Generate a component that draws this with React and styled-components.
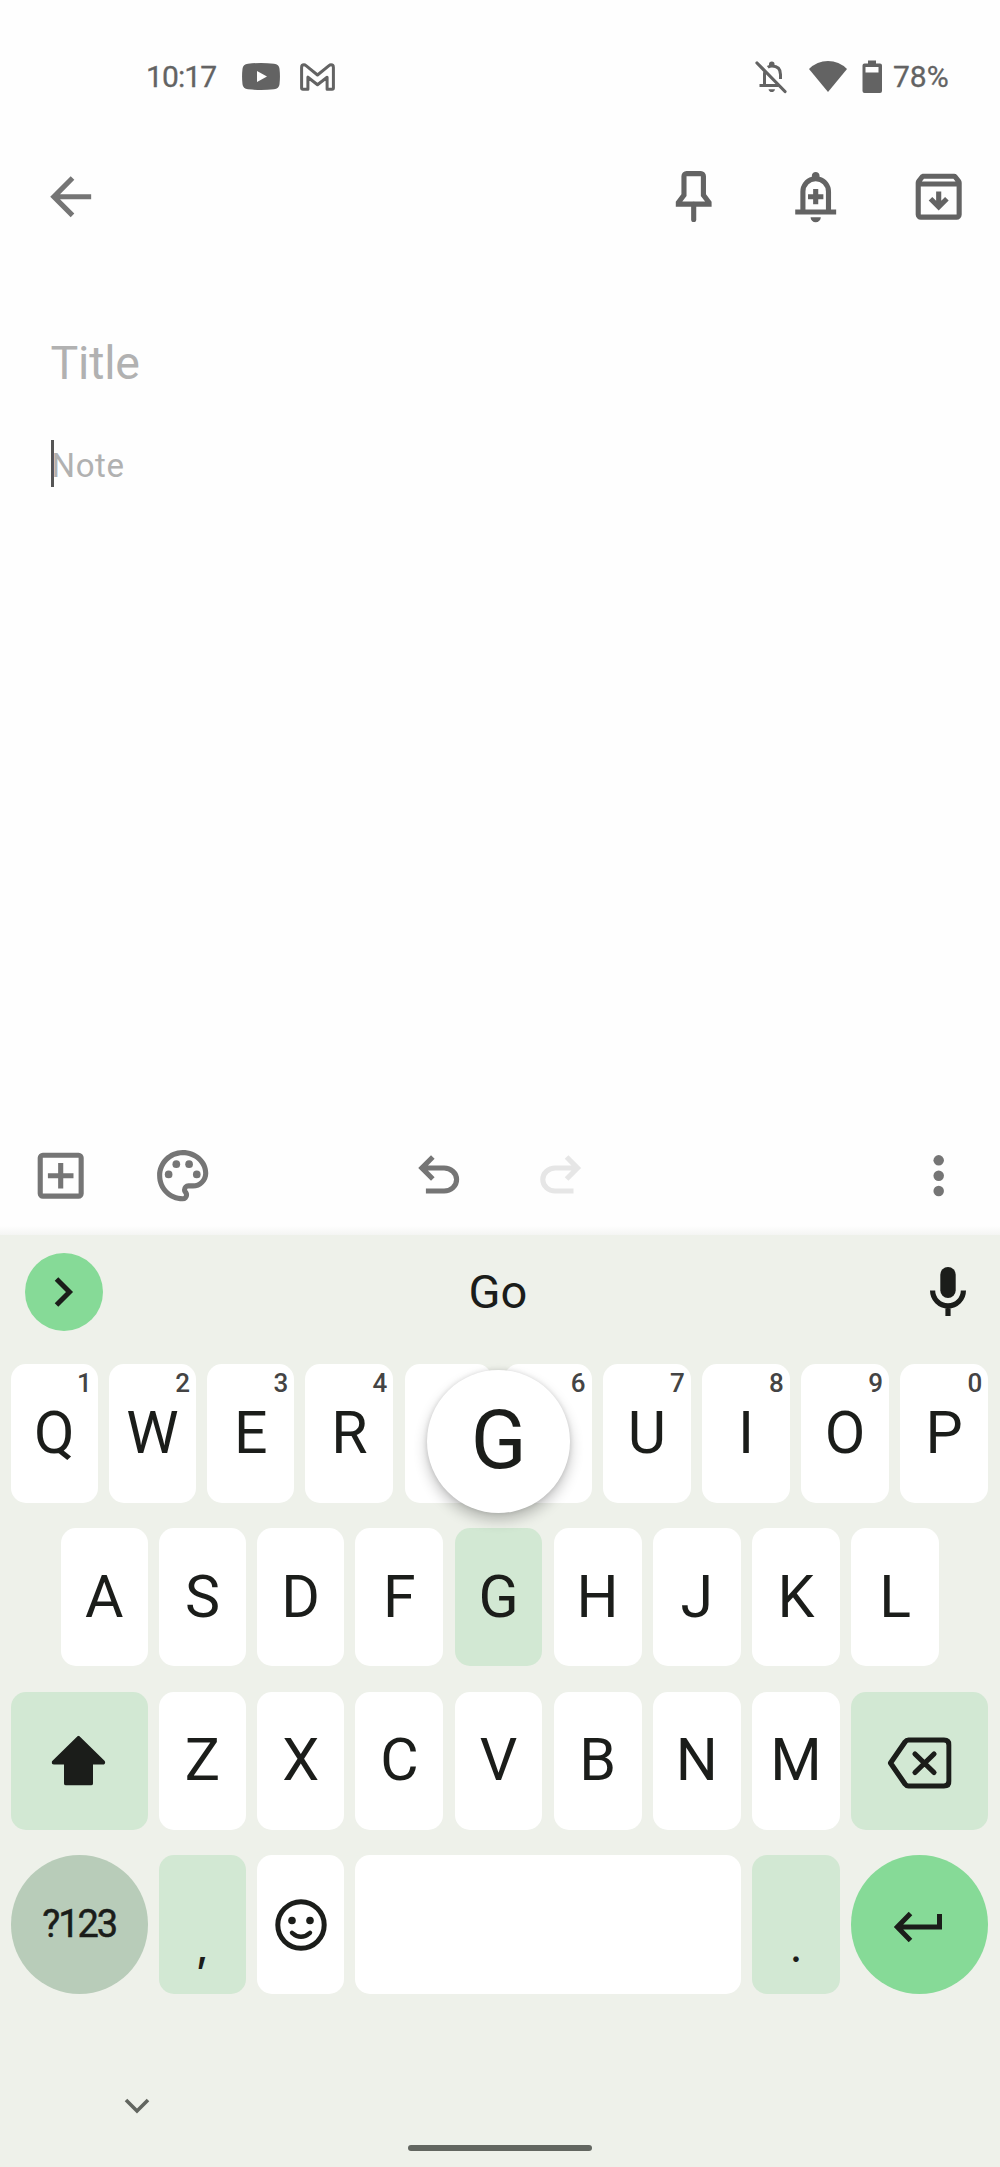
import React from "react"
import styled, { createGlobalStyle } from "styled-components"

const colors = {
  page: "#fefefe",
  keyboard: "#eef1ea",
  key: "#ffffff",
  tonal: "#d2e8d3",
  symbols: "#b8ccb9",
  accent: "#86da97",
  ink: "#1b1d1a",
  icon: "#757575",
  iconDark: "#636363",
  hint: "#b1b1b1",
}

const GlobalStyle = createGlobalStyle`
  body {
    margin: 0;
    background: ${colors.page};
  }
`

const Screen = styled.div`
  display: flex;
  flex-direction: column;
  width: 1000px;
  height: 2167px;
  overflow: hidden;
  background: ${colors.page};
  font-family: Roboto, "Liberation Sans", sans-serif;
  color: ${colors.ink};
`

const Icon = styled.svg`
  display: block;
  flex: none;
  width: ${props => props.$w || 61.4}px;
  height: ${props => props.$h || props.$w || 61.4}px;
  margin-left: ${props => props.$left || 0}px;
  fill: currentColor;
`

const KeyIcon = styled(Icon)`
  transform: translate(${props => props.$x || 0}px, ${props => props.$y || 0}px);
`

const StatusBar = styled.header`
  box-sizing: border-box;
  display: flex;
  align-items: center;
  height: 153px;
  padding: 0 49px 0 146px;
  color: ${colors.iconDark};
`

const Clock = styled.span`
  width: 96px;
  font-size: 30px;
  letter-spacing: -0.9px;
  -webkit-text-stroke: 0.3px;
`

const Notifications = styled.div`
  display: flex;
  align-items: center;
  gap: 20px;
`

const SystemIcons = styled.div`
  display: flex;
  align-items: center;
  margin-left: auto;
`

const Battery = styled.span`
  width: 58px;
  margin-left: 11px;
  font-size: 30px;
  -webkit-text-stroke: 0.3px;
`

const AppBar = styled.nav`
  box-sizing: border-box;
  display: flex;
  align-items: center;
  height: 88px;
  padding: 0 31px 0 40px;
  color: ${colors.iconDark};
`

const Actions = styled.div`
  display: flex;
  gap: 60.8px;
  margin-left: auto;
`

const Back = styled.div`
  color: ${colors.icon};
`

const Editor = styled.main`
  flex: 1;
  padding: 92px 50.5px 0;
  color: ${colors.hint};
`

const TitleField = styled.div`
  height: 60px;
  font-size: 46.5px;
  line-height: 60px;
  letter-spacing: -0.2px;
`

const NoteField = styled.div`
  height: 47px;
  margin-top: 46.5px;
  border-left: 3px solid #555;
  font-size: 33px;
  line-height: 51px;
  letter-spacing: 0.6px;
  text-indent: -2px;
`

const Toolbar = styled.footer`
  box-sizing: border-box;
  display: flex;
  align-items: center;
  height: 119px;
  padding: 0 31px 0 30px;
  background: linear-gradient(to top, #f4f5f3, ${colors.page} 9px);
  color: ${colors.icon};
`

const ToolGroup = styled.div`
  display: flex;
  gap: ${props => props.$gap}px;
  margin-left: ${props => props.$left || 0};
`

const Keyboard = styled.section`
  box-sizing: border-box;
  height: 932px;
  background: ${colors.keyboard};
`

const Suggestions = styled.div`
  box-sizing: border-box;
  display: grid;
  grid-template-columns: 78px 1fr 78px;
  align-items: center;
  height: 129px;
  padding: 0 13px 16px 25px;
`

const Expand = styled.div`
  display: grid;
  place-items: center;
  height: 78px;
  border-radius: 50%;
  background: ${colors.accent};
`

const Suggestion = styled.div`
  padding-right: 16px;
  font-size: 47px;
  text-align: center;
`

const Mic = styled.div`
  display: grid;
  place-items: center;
`

const Rows = styled.div`
  display: flex;
  flex-direction: column;
  gap: 25.1px;
`

const Row = styled.div`
  display: flex;
  gap: 11.25px;
  padding: 0 11.8px 0 ${props => props.$inset || 10.7}px;
`

const Key = styled.div`
  position: relative;
  display: grid;
  place-items: center;
  flex: ${props => (props.$grow ? "1" : "none")};
  box-sizing: border-box;
  width: ${props => (props.$wide ? 137 : props.$narrow ? 87 : 87.9)}px;
  height: 138.7px;
  padding-bottom: 2px;
  border-radius: ${props => (props.$round ? "50%" : "15px")};
  background: ${props => colors[props.$tone || "key"]};
  font-size: 59px;
  line-height: 1;
`

const Digit = styled.span`
  position: absolute;
  top: 6px;
  right: 6px;
  font-size: 26px;
  font-weight: 500;
  line-height: 26px;
  color: #444;
`

const SymbolsLabel = styled.span`
  font-size: 38px;
  letter-spacing: -2px;
  -webkit-text-stroke: 0.5px;
`

const Punctuation = styled.span`
  padding-top: 44px;
  font-family: ${props => props.$font}, sans-serif;
  font-size: 42px;
  font-weight: 500;
`

const KeyPreview = styled.div`
  position: absolute;
  z-index: 1;
  top: -158px;
  left: -27.5px;
  display: grid;
  place-items: center;
  box-sizing: border-box;
  width: 143px;
  height: 143px;
  padding-bottom: 3px;
  border-radius: 50%;
  background: #fff;
  box-shadow: 0 7px 14px rgba(0, 0, 0, 0.24), 0 0 5px rgba(0, 0, 0, 0.12);
  font-size: 82px;
`

const NavBar = styled.div`
  display: grid;
  grid-template-columns: 270.8px 184px;
  column-gap: 137px;
  height: 173px;
  color: #626660;
`

const HideKeyboard = styled.div`
  padding: 103.5px 0 0 124px;
`

const HomeHandle = styled.div`
  align-self: end;
  height: 6px;
  margin-bottom: 16.5px;
  border-radius: 3px;
  background: #626660;
`

const topRow = [
  ["Q", 1],
  ["W", 2],
  ["E", 3],
  ["R", 4],
  ["", ""],
  ["", 6],
  ["U", 7],
  ["I", 8],
  ["O", 9],
  ["P", 0],
]

const undoPath =
  "M7 19v-2h7.1q1.575 0 2.738-1T18 13.5t-1.162-2.5T14.1 10H7.8l2.6 2.6L9 14 4 9l5-5 1.4 1.4L7.8 8h6.3q2.425 0 4.163 1.575T20 13.5t-1.737 3.925T14.1 19z"

const bellPath =
  "M4 19v-2h2v-7q0-2.075 1.25-3.688T10.5 4.2v-.4q0-.625.438-1.062T12 2.3t1.063.438T13.5 3.8v.4q2 .5 3.25 2.112T18 10v7h2v2zm4-2h8v-7q0-1.65-1.175-2.825T12 6 9.175 7.175 8 10zm4 5q-.825 0-1.412-.587T10 20h4q0 .825-.587 1.413T12 22"

const Status = () => (
  <StatusBar>
    <Clock>10:17</Clock>
    <Notifications>
      <Icon $w={38} $h={27} viewBox="0 0 38 27">
        <path
          fillRule="evenodd"
          d="M6 .7Q19-.7 32 .7q5 .5 5.5 5 .9 7.8 0 15.6-.5 4.500-5.500 5-13 1.400-26 0-5-.5-5.500-5-.9-7.800 0-15.600 .5-4.500 5.500-5zM15 8v11l10-5.500z"
        />
      </Icon>
      <Icon $w={35} $h={28} viewBox="0 0 35 28">
        <path
          fill="none"
          stroke="currentColor"
          strokeWidth="3"
          strokeLinejoin="round"
          d="M1.6 25V4.5Q1.6 1.8 4 1.800q1 0 2 .8L17.500 12 29 2.600q1-.8 2-.8 2.400 0 2.400 2.700V25q0 1.300-1.300 1.300h-5V14.200L17.500 21.800 7.900 14.200v12.100h-5Q1.600 26.300 1.600 25z"
        />
      </Icon>
    </Notifications>
    <SystemIcons>
      <Icon $w={32} $h={34} viewBox="0 0 32 34">
        <g fill="none" stroke="currentColor" strokeWidth="3">
          <path d="M2 3l28 28.5" strokeWidth="3.2" strokeLinecap="round" />
          <path d="M9.5 25V14q0-1.5.5-2.5M4.5 25.5h19M12.8 7.2q1.7-1.3 4.2-1.3 8.5 0 8.5 8.5v4.5" />
        </g>
        <path d="M14 5.5V4q0-2.5 2.8-2.5T19.5 4v1.5zM13.5 29.2h6.5q-.5 2.8-3.2 2.8t-3.3-2.8z" />
      </Icon>
      <Icon $w={38} $h={33} $left={22} viewBox="0 0 38 33">
        <path d="M0 9Q8 1 19 1t19 8L19 32z" />
      </Icon>
      <Icon $w={20} $h={33} $left={15} viewBox="0 0 20 33">
        <path
          fillRule="evenodd"
          d="M6 .5h8v3h4q2 0 2 2V31q0 2-2 2H2.500q-2 0-2-2V5.500q0-2 2-2H6zM3.500 7v5.500h13V7z"
        />
      </Icon>
      <Battery>78%</Battery>
    </SystemIcons>
  </StatusBar>
)

const ShiftIcon = () => (
  <KeyIcon $w={54} $h={50} $x={-0.5} $y={0.5} viewBox="0 0 54 50">
    <path d="M26 .8q1-1 2 0l25 24.5q1.5 2 0 3.2-.5.5-1.5.5H41.5v19q0 2-2 2h-25q-2 0-2-2V29H2.5Q1 29 .6 28.200q-1-1.500.4-2.900z" />
  </KeyIcon>
)

const BackspaceIcon = () => (
  <KeyIcon $w={64} $h={52} $x={-0.5} $y={3} viewBox="0 0 64 52">
    <g fill="none" stroke="currentColor" strokeWidth="5.2" strokeLinejoin="round" strokeLinecap="round">
      <path d="M3 26L17.5 5Q19 3 21 3h35.5q5 0 5 5v36q0 5-5 5H21q-2 0-3.5-2z" />
      <path d="M27.500 17l19 18.500M46.500 17l-19 18.500" />
    </g>
  </KeyIcon>
)

const EmojiIcon = () => (
  <KeyIcon $w={52} $y={1} viewBox="0 0 52 52">
    <g fill="none" stroke="currentColor" strokeWidth="5">
      <circle cx="26" cy="26" r="23.2" />
      <path d="M17 33.800q9 8 18 0" strokeWidth="4.400" strokeLinecap="round" />
    </g>
    <circle cx="17" cy="21.5" r="3.8" />
    <circle cx="35" cy="21.5" r="3.8" />
  </KeyIcon>
)

const EnterIcon = () => (
  <KeyIcon $w={49} $h={31} $x={-1.5} $y={3.5} viewBox="0 0 49 31">
    <path
      d="M17 2L3.8 15.500 17 29M4 15.500h42V2.500"
      fill="none"
      stroke="currentColor"
      strokeWidth="5"
    />
  </KeyIcon>
)

const App = () => {
  return (
    <Screen>
      <GlobalStyle />
      <Status />
      <AppBar>
        <Back>
          <Icon viewBox="0 0 24 24">
            <path d="M20 11H7.83l5.59-5.59L12 4l-8 8 8 8 1.41-1.41L7.83 13H20z" />
          </Icon>
        </Back>
        <Actions>
          <Icon viewBox="0 0 24 24">
            <g fill="none" stroke="currentColor" strokeWidth="2">
              <path d="M8.2 4a1 1 0 0 1 1-1h5.6a1 1 0 0 1 1 1v7.4l2.2 2.9v.6H6v-.6l2.2-2.9z" />
              <path d="M12 15v5.9" strokeLinecap="round" />
            </g>
          </Icon>
          <Icon viewBox="0 0 24 24">
            <path d={bellPath} />
            <path d="M11 9h2v2h2v2h-2v2h-2v-2H9v-2h2z" />
          </Icon>
          <Icon viewBox="0 0 24 24">
            <path
              fillRule="evenodd"
              d="M20.54 5.23l-1.39-1.68A1.45 1.45 0 0 0 18 3H6c-.47 0-.88.21-1.16.55L3.46 5.23C3.17 5.57 3 6.02 3 6.5V19a2 2 0 0 0 2 2h14a2 2 0 0 0 2-2V6.5c0-.48-.17-.93-.46-1.27zM6.24 5h11.52l.83 1.1H5.42zM5 19V8h14v11z"
            />
            <path d="M12 17.4l3.9-3.9-1.4-1.4-1.5 1.5V10h-2v3.6l-1.5-1.5-1.4 1.4z" />
          </Icon>
        </Actions>
      </AppBar>

      <Editor>
        <TitleField>Title</TitleField>
        <NoteField>Note</NoteField>
      </Editor>

      <Toolbar>
        <ToolGroup $gap={60.8}>
          <Icon viewBox="0 0 24 24">
            <path
              fillRule="evenodd"
              d="M5 3h14a2 2 0 0 1 2 2v14a2 2 0 0 1-2 2H5a2 2 0 0 1-2-2V5a2 2 0 0 1 2-2zm0 2v14h14V5zM11 7h2v4h4v2h-4v4h-2v-4H7v-2h4z"
            />
          </Icon>
          <Icon viewBox="0 0 24 24">
            <path d="M12 22C6.49 22 2 17.51 2 12S6.49 2 12 2s10 4.04 10 9c0 3.31-2.69 6-6 6h-1.77c-.28 0-.5.22-.5.5 0 .12.05.23.13.33.41.47.64 1.06.64 1.67A2.5 2.5 0 0 1 12 22m0-18c-4.41 0-8 3.59-8 8s3.59 8 8 8c.28 0 .5-.22.5-.5a.54.54 0 0 0-.14-.35c-.41-.46-.63-1.05-.63-1.65a2.5 2.5 0 0 1 2.5-2.5H16c2.21 0 4-1.79 4-4 0-3.86-3.59-7-8-7" />
            <circle cx="6.5" cy="11.5" r="1.5" />
            <circle cx="9.5" cy="7.5" r="1.5" />
            <circle cx="14.5" cy="7.5" r="1.5" />
            <circle cx="17.5" cy="11.5" r="1.5" />
          </Icon>
        </ToolGroup>
        <ToolGroup $gap={60.8} $left="194px">
          <Icon viewBox="0 0 24 24">
            <path d={undoPath} />
          </Icon>
          <Icon viewBox="0 0 24 24" color="#e6e6e6">
            <path d={undoPath} transform="matrix(-1 0 0 1 24 0)" />
          </Icon>
        </ToolGroup>
        <ToolGroup $left="auto">
          <Icon viewBox="0 0 24 24">
            <circle cx="12" cy="6" r="2.05" />
            <circle cx="12" cy="12" r="2.05" />
            <circle cx="12" cy="18" r="2.05" />
          </Icon>
        </ToolGroup>
      </Toolbar>

      <Keyboard>
        <Suggestions>
          <Expand>
            <Icon $w={20} $h={30} viewBox="0 0 20 30">
              <path d="M2.5 2L15.5 15 2.5 28" fill="none" stroke="currentColor" strokeWidth="5" />
            </Icon>
          </Expand>
          <Suggestion>Go</Suggestion>
          <Mic>
            <Icon $w={36} $h={49} viewBox="0 0 36 49">
              <rect x="10.3" width="15.4" height="31" rx="7.7" />
              <path
                d="M2.6 23.5a15.4 15.4 0 0 0 30.8 0M18 38.5V49"
                fill="none"
                stroke="currentColor"
                strokeWidth="5.2"
              />
            </Icon>
          </Mic>
        </Suggestions>

        <Rows>
          <Row>
            {topRow.map(([letter, digit], i) => (
              <Key key={i} $narrow={i < 3}>
                {letter}
                <Digit>{digit}</Digit>
              </Key>
            ))}
          </Row>
          <Row $inset={60.7}>
            {"ASDFGHJKL".split("").map((letter, i) => (
              <Key key={letter} $narrow={i < 3} $tone={letter === "G" ? "tonal" : "key"}>
                {letter}
                {letter === "G" && <KeyPreview>G</KeyPreview>}
              </Key>
            ))}
          </Row>
          <Row>
            <Key $wide $tone="tonal">
              <ShiftIcon />
            </Key>
            {"ZXCVBNM".split("").map((letter, i) => (
              <Key key={letter} $narrow={i < 2}>
                {letter}
              </Key>
            ))}
            <Key $wide $tone="tonal">
              <BackspaceIcon />
            </Key>
          </Row>
          <Row>
            <Key $wide $round $tone="symbols">
              <SymbolsLabel>?123</SymbolsLabel>
            </Key>
            <Key $narrow $tone="tonal">
              <Punctuation $font="Inter">,</Punctuation>
            </Key>
            <Key $narrow>
              <EmojiIcon />
            </Key>
            <Key $grow />
            <Key $tone="tonal">
              <Punctuation $font="Lato">.</Punctuation>
            </Key>
            <Key $wide $round $tone="accent">
              <EnterIcon />
            </Key>
          </Row>
        </Rows>

        <NavBar>
          <HideKeyboard>
            <Icon $w={26} $h={16} viewBox="0 0 26 16">
              <path d="M2 2l11 11L24 2" fill="none" stroke="currentColor" strokeWidth="3.6" />
            </Icon>
          </HideKeyboard>
          <HomeHandle />
        </NavBar>
      </Keyboard>
    </Screen>
  )
}

export default App
